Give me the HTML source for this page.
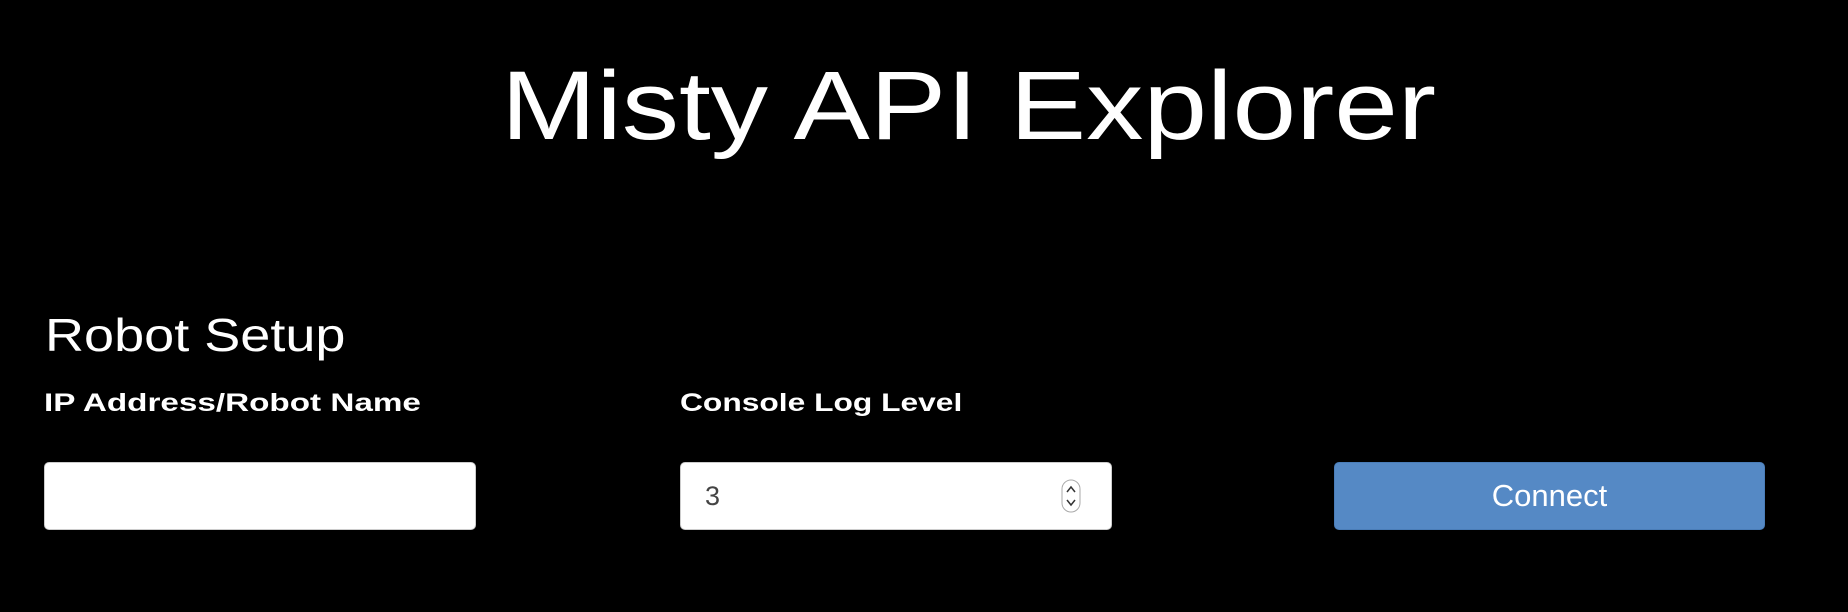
<!DOCTYPE html>
<html><head><style>
html,body{margin:0;padding:0;background:#000;width:1848px;height:612px;overflow:hidden;font-family:"Liberation Sans",sans-serif;color:#fff}
.t{position:absolute;white-space:nowrap;transform-origin:left top}
.box{position:absolute;background:#fff;border:1px solid #ccc;border-radius:5px;box-sizing:border-box}
</style></head><body>
<div class="t" style="left:501px;top:46px;font-size:97px;line-height:120px;transform:scaleX(1.18)">Misty API Explorer</div>
<div class="t" style="left:45px;top:307px;font-size:46px;line-height:56px;transform:scaleX(1.175)">Robot Setup</div>
<div class="t" style="left:44px;top:388px;font-size:25px;line-height:30px;font-weight:bold;transform:scaleX(1.33)">IP Address/Robot Name</div>
<div class="t" style="left:680px;top:388px;font-size:25px;line-height:30px;font-weight:bold;transform:scaleX(1.27)">Console Log Level</div>
<div class="box" style="left:44px;top:462px;width:432px;height:68px"></div>
<div class="box" style="left:680px;top:462px;width:432px;height:68px">
 <div class="t" style="left:24px;top:18px;font-size:27px;line-height:30px;color:#444">3</div>
 <svg style="position:absolute;left:380px;top:16px" width="20" height="34" viewBox="0 0 20 34"><rect x="1" y="1" width="18" height="32" rx="9" fill="#fff" stroke="#aaa"/><path d="M6 13l4-5 4 5M6 21l4 5 4-5" fill="none" stroke="#333" stroke-width="1.5"/></svg>
</div>
<div style="position:absolute;left:1334px;top:462px;width:431px;height:68px;background:#5589c5;border:1px solid #4a7db8;border-radius:5px;box-sizing:border-box;text-align:center;font-size:31px;line-height:66px">Connect</div>
</body></html>
